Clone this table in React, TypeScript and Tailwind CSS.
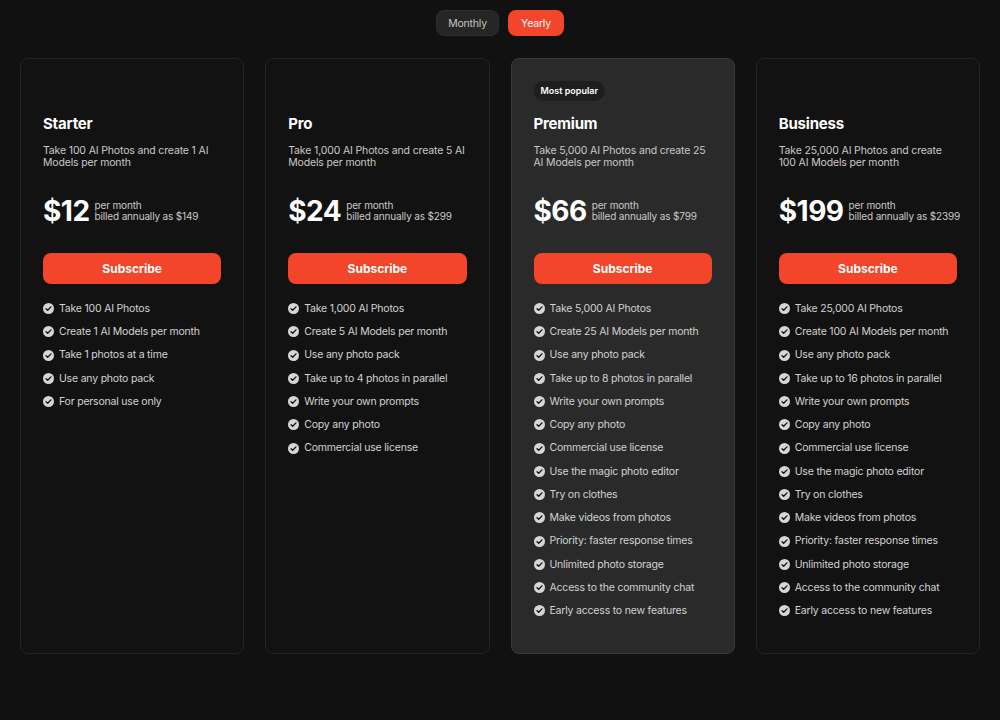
const plans = [
  {
    name: 'Starter',
    desc: 'Take 100 AI Photos and create 1 AI Models per month',
    price: '$12',
    annual: '$149',
    features: [
      'Take 100 AI Photos',
      'Create 1 AI Models per month',
      'Take 1 photos at a time',
      'Use any photo pack',
      'For personal use only',
    ],
  },
  {
    name: 'Pro',
    desc: 'Take 1,000 AI Photos and create 5 AI Models per month',
    price: '$24',
    annual: '$299',
    features: [
      'Take 1,000 AI Photos',
      'Create 5 AI Models per month',
      'Use any photo pack',
      'Take up to 4 photos in parallel',
      'Write your own prompts',
      'Copy any photo',
      'Commercial use license',
    ],
  },
  {
    name: 'Premium',
    popular: true,
    desc: 'Take 5,000 AI Photos and create 25 AI Models per month',
    price: '$66',
    annual: '$799',
    features: [
      'Take 5,000 AI Photos',
      'Create 25 AI Models per month',
      'Use any photo pack',
      'Take up to 8 photos in parallel',
      'Write your own prompts',
      'Copy any photo',
      'Commercial use license',
      'Use the magic photo editor',
      'Try on clothes',
      'Make videos from photos',
      'Priority: faster response times',
      'Unlimited photo storage',
      'Access to the community chat',
      'Early access to new features',
    ],
  },
  {
    name: 'Business',
    desc: 'Take 25,000 AI Photos and create 100 AI Models per month',
    price: '$199',
    annual: '$2399',
    features: [
      'Take 25,000 AI Photos',
      'Create 100 AI Models per month',
      'Use any photo pack',
      'Take up to 16 photos in parallel',
      'Write your own prompts',
      'Copy any photo',
      'Commercial use license',
      'Use the magic photo editor',
      'Try on clothes',
      'Make videos from photos',
      'Priority: faster response times',
      'Unlimited photo storage',
      'Access to the community chat',
      'Early access to new features',
    ],
  },
];

// check in a filled circle
const CheckIcon = () => (
  <svg width="11" height="11" viewBox="0 0 20 20" className="shrink-0">
    <circle cx="10" cy="10" r="10" fill="#d6d6d6" />
    <path d="M5.5 10.3l3 3 6-6.3" fill="none" stroke="#141414" strokeWidth="2.4" strokeLinecap="round" strokeLinejoin="round" />
  </svg>
);

export default function App() {
  return (
    <div className="min-h-[720px] w-full bg-[#111111] text-white font-['Inter','Liberation_Sans',sans-serif]">
      {/* toggle */}
      <div className="flex justify-center gap-[9px] pt-[10px]">
        <button className="h-[26px] w-[63px] rounded-lg bg-[#262626] border border-[#2e2e2e] pt-px text-[10.5px] tracking-[-0.2px] text-[#c4c4c4]">
          Monthly
        </button>
        <button className="h-[26px] w-[56px] rounded-lg bg-[#f2452a] pt-px text-[10.5px] tracking-[-0.2px] text-white">
          Yearly
        </button>
      </div>

      {/* plans */}
      <div className="grid grid-cols-4 gap-[21px] px-[20px] mt-[22px]">
        {plans.map((p) => (
          <div
            key={p.name}
            className={
              p.popular
                ? 'h-[596px] rounded-lg border border-[#3a3a3a] bg-[#2a2a2a] px-[22px] pt-[22px]'
                : 'h-[596px] rounded-lg border border-[#232323] bg-[#121212] px-[22px] pt-[22px]'
            }
          >
            <div className="flex h-[20px] items-center">
              {p.popular && (
                <span className="flex h-[20px] items-center rounded-full bg-[#1e1e1e] px-[7px] text-[9px] font-semibold text-white">
                  Most popular
                </span>
              )}
            </div>
            <h2 className="mt-[13px] text-[15px] leading-[20px] font-bold tracking-[-0.2px]">{p.name}</h2>
            <p className="mt-[11px] text-[10.5px] leading-[12px] tracking-[-0.15px] text-[#c9c9c9]">{p.desc}</p>

            <div className="mt-[27px] flex items-center h-[30px]">
              <span className="text-[28px] font-bold tracking-[-0.5px] leading-[30px]">{p.price}</span>
              <div className="ml-[5px] whitespace-nowrap text-[10px] leading-[11px] tracking-[-0.15px] text-[#c9c9c9]">
                <div>per month</div>
                <div>billed annually as {p.annual}</div>
              </div>
            </div>

            <button className="mt-[27px] h-[31px] w-full rounded-lg bg-[#f2452a] text-[12px] font-bold text-white">
              Subscribe
            </button>

            <ul className="mt-[13px] flex flex-col">
              {p.features.map((f) => (
                <li
                  key={f}
                  className="flex h-[23.25px] items-center gap-[5px] whitespace-nowrap text-[10.5px] tracking-[-0.2px] text-[#d2d2d2]"
                >
                  <CheckIcon />
                  {f}
                </li>
              ))}
            </ul>
          </div>
        ))}
      </div>
    </div>
  );
}
